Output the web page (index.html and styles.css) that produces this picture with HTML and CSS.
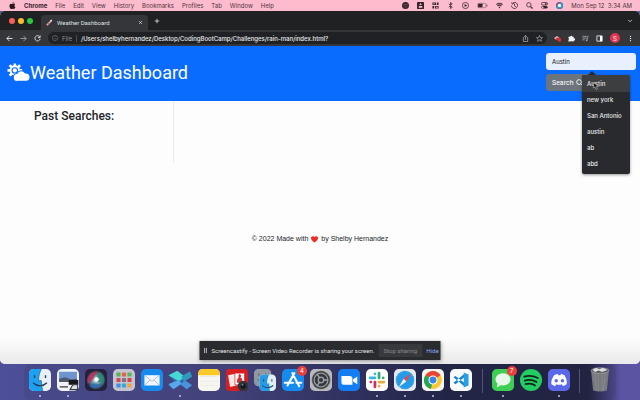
FILE: index.html
```html
<!DOCTYPE html>
<html lang="en">
<head>
<meta charset="utf-8">
<meta name="viewport" content="width=device-width, initial-scale=1">
<title>Weather Dashboard</title>
<link rel="stylesheet" href="styles.css">
</head>
<body>
<div class="desktop">
  <nav class="menubar" aria-label="Menu bar">
    <svg class="apple" viewBox="0 0 16 16"><path d="M11 0c.2 1.600-1.300 3.400-3 3.400C7.800 1.800 9.300.2 11 0zM8 4.600c.8 0 1.700-.9 3.300-.9 1.300.1 2.300.7 2.900 1.600-2.600 1.600-2.200 5.100.5 6.100C14 13.400 12.700 16 11.100 16c-1.200 0-1.600-.7-3-.7s-1.900.7-3 .7C3 16 .8 11.700.9 8.600 1 5.400 3 3.800 4.900 3.800c1.300 0 2.300.8 3.100.8z"/></svg>
    <b>Chrome</b><span>File</span><span>Edit</span><span>View</span><span>History</span><span>Bookmarks</span><span>Profiles</span><span>Tab</span><span>Window</span><span>Help</span>
    <div class="status">
      <svg viewBox="0 0 16 16"><circle cx="8" cy="8" r="8"/><path d="M3 6h10M4 10c2 2 6 2 8 0" stroke="#8a626f" stroke-width="1.500" fill="none"/></svg>
      <svg viewBox="0 0 16 16"><rect width="16" height="16" rx="2"/><path d="M8 2l3 5H5zM4 9h8v4H4z" fill="#fdbccd"/></svg>
      <svg viewBox="0 0 16 16"><path d="M1 1h8v6H1zM11 1h4v6h-4zM1 9h4v6H1zM7 9h8v6H7z"/><path d="M3 3h3v2H3zM9 11h4v2H9z" fill="#fdbccd"/></svg>
      <svg viewBox="0 0 16 16"><path d="M4 4l8 8-4 3V1l4 3-8 8" class="line"/></svg>
      <svg viewBox="0 0 16 16"><circle cx="8" cy="8" r="7" class="line"/><path d="M6 4.500l6 3.500-6 3.500z"/></svg>
      <svg class="battery" viewBox="0 0 24 16"><rect x="1" y="3" width="19" height="10" rx="3" class="line thin"/><rect x="2" y="4" width="10" height="8" rx="1"/><path d="M22 6v4" class="line"/></svg>
      <svg viewBox="0 0 16 16"><path d="M1 6c4-4 10-4 14 0M3.500 9c3-3 6-3 9 0M8 11v3" class="line wide"/></svg>
      <svg viewBox="0 0 16 16"><path d="M3 3a7 7 0 1 1-2 5M1 1l2 4 4-2M8 4v5l3 2" class="line"/></svg>
      <svg viewBox="0 0 16 16"><circle cx="6.500" cy="6.500" r="5" class="line"/><path d="M10 10l5 5" class="line wide"/></svg>
      <svg viewBox="0 0 16 16"><rect x="1" y="1" width="14" height="6" rx="3" class="line"/><rect x="1" y="9" width="14" height="6" rx="3"/><circle cx="11" cy="4" r="2"/><circle cx="4" cy="12" r="2" fill="#fdbccd"/></svg>
      <svg viewBox="0 0 16 16"><circle cx="8" cy="8" r="8" fill="#35476c"/><path d="M2 8a6 6 0 0 1 6-6" stroke="#b8509c" stroke-width="3" fill="none"/><path d="M8 2a6 6 0 1 1-6 6" stroke="#2aa5d8" stroke-width="3" fill="none"/><circle cx="8" cy="8" r="4" fill="#fff"/></svg>
      <time>Mon Sep 12&nbsp; 3:34 AM</time>
    </div>
  </nav>

  <div class="window">
    <div class="tabstrip">
      <i class="light red"></i><i class="light yellow"></i><i class="light green"></i>
      <div class="tab">
        <svg viewBox="0 0 16 16"><path d="M2 14L12 4" stroke="#e7a9b0" stroke-width="4"/><path d="M9 3l5-2-1 5z" fill="#eee"/><path d="M4 9l3 3" stroke="#8f5761" stroke-width="2"/></svg>
        <span>Weather Dashboard</span>
        <button class="plain" aria-label="Close tab"><svg viewBox="0 0 16 16"><path d="M3 3l10 10M13 3L3 13" class="pale"/></svg></button>
      </div>
      <button class="plain newtab" aria-label="New tab"><svg viewBox="0 0 16 16"><path d="M8 2v12M2 8h12" class="pale"/></svg></button>
      <button class="plain last" aria-label="Search tabs"><svg viewBox="0 0 16 16"><path d="M3 5l5 5 5-5" class="pale"/></svg></button>
    </div>
    <div class="toolbar">
      <button class="plain" aria-label="Back"><svg viewBox="0 0 16 16"><path d="M15 8H2M8 2L2 8l6 6" class="pale"/></svg></button>
      <button class="plain dim" aria-label="Forward"><svg viewBox="0 0 16 16"><path d="M1 8h13M8 2l6 6-6 6" class="pale"/></svg></button>
      <button class="plain" aria-label="Reload"><svg viewBox="0 0 16 16"><path d="M13 4a6 6 0 1 0 1 5M14 1v5H9" class="pale"/></svg></button>
      <div class="address">
        <svg class="info" viewBox="0 0 16 16"><circle cx="8" cy="8" r="7" class="pale thin"/><path d="M8 7v5M8 4v1.500" class="pale thin"/></svg>
        <span class="scheme">File</span>
        <span class="url">/Users/shelbyhernandez/Desktop/CodingBootCamp/Challenges/rain-man/index.html?</span>
        <button class="plain dim" aria-label="Share"><svg viewBox="0 0 16 16"><path d="M5 6H3v9h10V6h-2M8 11V1M5 4l3-3 3 3" class="pale"/></svg></button>
        <button class="plain" aria-label="Bookmark"><svg viewBox="0 0 16 16"><path d="M8 1l2 5h5l-4 3.500 1.500 5L8 11.500l-4.500 3 1.500-5L1 6h5z" class="pale thin"/></svg></button>
      </div>
      <div class="extensions">
        <button class="plain" aria-label="Screencastify"><svg viewBox="0 0 16 16"><path d="M0 7l7-5 5 4v5H5z" fill="#f3bac0"/><path d="M5 6h5v5H5z" fill="#b32432"/><circle cx="12" cy="11" r="4.500" fill="#e52828"/></svg></button>
        <button class="plain" aria-label="Extensions"><svg viewBox="0 0 16 16"><path d="M1 4h4a2.500 2.500 0 1 1 5 0h3v4a2.500 2.500 0 1 1 0 4v3H9a2.500 2.500 0 0 0-4 0H1v-4a2.500 2.500 0 0 0 0-4z" fill="#f1f3f4"/></svg></button>
        <button class="plain dim" aria-label="Media"><svg viewBox="0 0 16 16"><path d="M1 3h9M1 7h9M1 11h5M12 12V3h3" class="pale"/><circle cx="10.500" cy="12" r="2" fill="#e8eaed"/></svg></button>
        <button class="plain" aria-label="Side panel"><svg viewBox="0 0 16 16"><path d="M2 2h12v12H2z" class="pale"/><path d="M9 2h5v12H9z" fill="#fff"/></svg></button>
        <button class="avatar" aria-label="Profile">S</button>
        <button class="plain" aria-label="Menu"><svg viewBox="0 0 16 16"><g fill="#e8eaed"><circle cx="8" cy="3" r="1.500"/><circle cx="8" cy="8" r="1.500"/><circle cx="8" cy="13" r="1.500"/></g></svg></button>
      </div>
    </div>

    <div class="page">
      <header class="hero">
        <svg class="cloud" viewBox="0 0 44 36"><g fill="none" stroke="#fff"><circle cx="15" cy="14" r="8" stroke-width="3.500"/><path d="M15 1v5M5 4l4 4M1 14h5M5 24l4-4M25 4l-4 4M24 14h5" stroke-width="5"/></g><circle cx="15" cy="14" r="4" fill="#fff"/><path d="M20 35a7.500 7.500 0 0 1-1-15 9 9 0 0 1 16-1 8 8 0 0 1 2 16z" fill="#fff" stroke="#0a6cff" stroke-width="2"/></svg>
        <h1>Weather Dashboard</h1>
        <form class="search">
          <input type="text" value="Austin" aria-label="City">
          <button type="button">Search <svg viewBox="0 0 16 16"><circle cx="7" cy="7" r="5.500"/><path d="M11 11l4 4"/></svg></button>
          <ul class="suggestions">
            <li class="active">Austin</li><li>new york</li><li>San Antonio</li><li>austin</li><li>ab</li><li>abd</li>
          </ul>
          <svg class="cursor" viewBox="0 0 12 16"><path d="M1 1v11l3-2.500L6 15l2.500-1-2-5H11z" fill="#111" stroke="#ddd"/></svg>
        </form>
      </header>
      <main><aside><h2>Past Searches:</h2></aside></main>
      <footer>© 2022 Made with <svg viewBox="0 0 16 16"><path d="M8 15C3 11 0 8 0 5a4.200 4.200 0 0 1 8-2 4.200 4.200 0 0 1 8 2c0 3-3 6-8 10z" fill="#ef2b24"/></svg> by Shelby Hernandez</footer>
    </div>
  </div>

  <div class="sharing">
    <svg viewBox="0 0 8 16"><path d="M2 2v12M6 2v12" stroke="#c9cacc" stroke-width="2"/></svg>
    <span>Screencastify - Screen Video Recorder is sharing your screen.</span>
    <button class="stop">Stop sharing</button>
    <button class="hide">Hide</button>
  </div>

  <div class="dock">
    <div class="app running"><svg viewBox="0 0 32 32"><rect width="32" height="32" rx="7" fill="#e9eff6"/><path d="M7 0h11c-3 6-4 11-4 17h4c0 6 1 10 2 15H7a7 7 0 0 1-7-7V7a7 7 0 0 1 7-7z" fill="#1ca2f4"/><path d="M8 9v4M24 9v4M6 20c6 6 14 6 20 0" stroke="#223a58" stroke-width="2" fill="none"/><path d="M18 0c-3 6-4 11-4 17h4c0 6 1 10 2 15" stroke="#31597f" fill="none"/></svg></div>
    <div class="app running"><svg viewBox="0 0 32 32"><rect width="32" height="32" rx="7" fill="#f0f2f5"/><path d="M3 4h26v13H3z" fill="#6e94d0"/><path d="M3 14l9-2 8 3 9-1v5H3z" fill="#4e596d"/><path d="M17 16h14v7H17z" fill="#17191d"/><path d="M4 26h12M19 30l4-7h7v7z" stroke="#35393e" stroke-width="1.500" fill="#dce0e2"/></svg></div>
    <div class="app"><svg viewBox="0 0 32 32"><defs><radialGradient id="orb"><stop offset="0" stop-color="#fff"/><stop offset=".35" stop-color="#7ea9b6"/><stop offset="1" stop-color="#292643"/></radialGradient></defs><rect width="32" height="32" rx="7" fill="#252139"/><circle cx="16" cy="16" r="14" fill="url(#orb)"/><path d="M4 21C1 9 12 2 20 4c-8 3-4 11-16 17z" fill="#c02e59" opacity=".8"/><path d="M20 4c9 3 11 14 5 20 0-7-9-4-9-8z" fill="#278879" opacity=".8"/><path d="M7 25c4-7 12-2 18-2-5 6-13 7-18 2z" fill="#2d6faf" opacity=".8"/><circle cx="17" cy="15" r="3" fill="#fff"/></svg></div>
    <div class="app"><svg viewBox="0 0 32 32"><rect width="32" height="32" rx="7" fill="#c3c4d0"/><g><rect x="5" y="5" width="6" height="6" rx="1" fill="#50b653"/><rect x="13" y="5" width="6" height="6" rx="1" fill="#eb6047"/><rect x="21" y="5" width="6" height="6" rx="1" fill="#52b85a"/><rect x="5" y="13" width="6" height="6" rx="1" fill="#dc4256"/><rect x="13" y="13" width="6" height="6" rx="1" fill="#747780"/><rect x="21" y="13" width="6" height="6" rx="1" fill="#e54040"/><rect x="5" y="21" width="6" height="6" rx="1" fill="#438ddd"/><rect x="13" y="21" width="6" height="6" rx="1" fill="#38a9d5"/><rect x="21" y="21" width="6" height="6" rx="1" fill="#efa33a"/></g></svg></div>
    <div class="app"><svg viewBox="0 0 32 32"><rect width="32" height="32" rx="7" fill="#168bed"/><path d="M5 9h22v15H5z" fill="#f2f6fa"/><path d="M5 9l11 9L27 9M5 24l8-8M27 24l-8-8" stroke="#95a9bd" fill="none"/></svg></div>
    <div class="app running"><svg class="wide-icon" viewBox="0 0 36 32"><path d="M0 9l10-5 8 7L29 5l7 4-9 8 9 7-8 6-10-7-10 7-8-6 9-7z" fill="#2c6fae"/><path d="M1 9L14 2l12 10-10 6z" fill="#45dad4"/><path d="M20 11L33 3l3 8-12 7z" fill="#3199bc"/><path d="M1 22l16-6 3 6-12 8z" fill="#5aa7ee"/><path d="M19 22l7-5 10 7-8 6z" fill="#4b93dd"/></svg></div>
    <div class="app"><svg viewBox="0 0 32 32"><rect width="32" height="32" rx="7" fill="#f7f6f1"/><path d="M0 9V7a7 7 0 0 1 7-7h18a7 7 0 0 1 7 7v2z" fill="#ffc928"/><path d="M3 11h26" stroke="#cfcfc9" stroke-dasharray="1 1"/><path d="M3 18h26M3 24h26" stroke="#e8e8e3"/></svg></div>
    <div class="app"><svg viewBox="0 0 32 32"><rect width="32" height="32" rx="5" fill="#d71e23"/><path d="M3 9l14-3 2 17-13 3z" fill="#f5e9e7"/><path d="M13 6h14v17H13z" fill="#fff" stroke="#d71e23"/><path d="M16 20c0-6 1-8 4-8s4 3 4 8zM20 7l2.500 3-2.500 3-2.500-3z" fill="#d33032"/><circle cx="25" cy="25" r="8" fill="#333638"/><circle cx="25" cy="25" r="4" fill="#14171d"/><circle cx="24" cy="23" r="1.500" fill="#748397"/></svg></div>
    <div class="app"><svg viewBox="0 0 32 32"><rect width="25" height="25" rx="6" fill="#9298a2"/><path d="M7 6v4M17 6v3M5 15c4 3 8 3 11 0" stroke="#424b58" fill="none"/><rect x="8" y="8" width="24" height="24" rx="6" fill="#e2edf6"/><path d="M14 8h8c-3 7-3 10-3 13h3l1 11h-9a6 6 0 0 1-6-6V14a6 6 0 0 1 6-6z" fill="#249be8"/><path d="M14 15v3M26 15v3M12 24c4 4 11 4 16 0" stroke="#24496b" stroke-width="1.500" fill="none"/></svg></div>
    <div class="app"><svg viewBox="0 0 32 32"><rect width="32" height="32" rx="7" fill="#168bee"/><path d="M15 6l10 19M18 6L8 24M4 20h12M21 20h7" stroke="#fff" stroke-width="3" stroke-linecap="round"/></svg><span class="badge">4</span></div>
    <div class="app"><svg viewBox="0 0 32 32"><rect width="32" height="32" rx="7" fill="#b8babd"/><circle cx="16" cy="16" r="13" fill="#34383d"/><circle cx="16" cy="16" r="10" fill="none" stroke="#96999d" stroke-width="2"/><circle cx="16" cy="16" r="4" fill="none" stroke="#96999d" stroke-width="2"/><path d="M19 16h7M14 13l-4-6M14 19l-4 6" stroke="#a2a5a8" stroke-width="2"/><circle cx="16" cy="16" r="13" fill="none" stroke="#5d6064" stroke-width="1.500" stroke-dasharray="1 1"/></svg></div>
    <div class="app"><svg viewBox="0 0 32 32"><rect width="32" height="32" rx="7" fill="#147df3"/><path d="M5 10h12a4 4 0 0 1 4 4v9H8a3 3 0 0 1-3-3zM22 15l6-4v11l-6-4z" fill="#fff"/></svg></div>
    <div class="app running"><svg viewBox="0 0 32 32"><rect width="32" height="32" rx="7" fill="#fff"/><g stroke-width="4" stroke-linecap="round"><path d="M13 7v0M6 13h7" stroke="#35b8df"/><path d="M19 6v7M25 13h0" stroke="#32ae76"/><path d="M7 19h0M13 19v7" stroke="#d72b65"/><path d="M19 19h7M19 25v0" stroke="#e5af35"/></g></svg></div>
    <div class="app running"><svg viewBox="0 0 32 32"><rect width="32" height="32" rx="7" fill="#e7e9ec"/><circle cx="16" cy="16" r="13.500" fill="#239be9"/><path d="M25 6L18 18l-4-4z" fill="#ef4646"/><path d="M7 26l7-12 4 4z" fill="#f2f3f5"/><circle cx="16" cy="16" r="12" fill="none" stroke="#9ad0f0" stroke-dasharray="1 3"/></svg></div>
    <div class="app running"><svg viewBox="0 0 32 32"><rect width="32" height="32" rx="7" fill="#f5f5f3"/><circle cx="16" cy="16" r="13" fill="#fbc82f"/><path d="M16 16L5 9a13 13 0 0 1 22 0z" fill="#e84436"/><path d="M16 16l-3 13A13 13 0 0 1 5 9z" fill="#27a455"/><circle cx="16" cy="16" r="6.500" fill="#fff"/><circle cx="16" cy="16" r="5" fill="#3984ed"/></svg></div>
    <div class="app running"><svg viewBox="0 0 32 32"><rect width="32" height="32" rx="7" fill="#f8f9fb"/><path d="M5 12l3-2 14 11v5zM5 20l3 2 14-11V6z" fill="#1685c9"/><path d="M20 5l7 3v16l-7 3z" fill="#299fe3"/></svg></div>
    <i class="divider"></i>
    <div class="app running"><svg viewBox="0 0 32 32"><rect width="32" height="32" rx="7" fill="#3fce54"/><ellipse cx="16" cy="15" rx="11" ry="9" fill="#e8f7e9"/><path d="M8 21l-1 6 7-4z" fill="#e8f7e9"/></svg><span class="badge">7</span></div>
    <div class="app"><svg viewBox="0 0 32 32"><circle cx="16" cy="16" r="16" fill="#22cd61"/><path d="M6 11c7-2 14-1 20 2M7 17c6-2 12-1 17 2M8 22c5-1 10-1 14 2" stroke="#17241d" stroke-width="2.500" stroke-linecap="round" fill="none"/></svg></div>
    <div class="app running"><svg viewBox="0 0 32 32"><rect width="32" height="32" rx="7" fill="#5b68e9"/><path d="M9 9l5-2 1 2h3l1-2 5 2c3 5 4 9 3 13l-5 3-2-3c-3 1-5 1-8 0l-2 3-5-3C4 18 6 13 9 9z" fill="#fff"/><circle cx="12" cy="17" r="2.500" fill="#5b68e9"/><circle cx="21" cy="17" r="2.500" fill="#5b68e9"/></svg></div>
    <i class="divider"></i>
    <div class="app"><svg class="trash" viewBox="0 0 32 36"><path d="M3 5h26l-3 29q-10 3-20 0z" fill="#77797d"/><path d="M8 7l3 27M13 7l1 28M19 7v28M24 7l-3 27" stroke="#8e9094"/><ellipse cx="16" cy="5" rx="13" ry="4" fill="#55585c" stroke="#a5a7aa"/><path d="M5 4l5-3 5 2 5-2 7 3-8 3-5-2-5 2z" fill="#d9dbdd"/></svg></div>
  </div>
</div>
</body>
</html>
```
FILE: styles.css
```css
* { box-sizing: border-box; }

body {
  margin: 0;
  font-family: Inter, "Liberation Sans", sans-serif;
  font-size: 6px;
  color: #212529;
}

button { font: inherit; color: inherit; border: 0; padding: 0; }
svg { display: block; flex: none; }
h1, h2, ul { margin: 0; padding: 0; font-weight: 500; }
h1, h2, .tab, .search button, .sharing { font-family: Roboto, "Liberation Sans", sans-serif; }

.desktop {
  display: flex;
  flex-direction: column;
  position: relative;
  min-height: 100vh;
  background: linear-gradient(90deg, #4d5099 0%, #45437f 35%, #171a36 70%, #15182c 92%, #5a54a3 97%);
}

/* Menu bar */
.menubar {
  display: flex;
  align-items: center;
  gap: 8px;
  height: 11px;
  padding: 0 8px 0 9px;
  background: #fdbccd;
  color: #50333c;
  white-space: nowrap;
}
.menubar .apple { width: 7px; height: 7px; fill: #2a1a20; }
.menubar b { color: #35202a; }
.status { display: flex; align-items: center; gap: 8px; margin-left: auto; }
.status svg { width: 7px; height: 7px; fill: #35242c; }
.status .battery { width: 11px; }
.status .line { fill: none; stroke: #4d3540; stroke-width: 2; }
.status .wide { stroke-width: 3; }
.status .thin { stroke-width: 1; }

/* Browser window */
.window {
  display: flex;
  flex: 1;
  flex-direction: column;
  overflow: hidden;
  border-radius: 5px;
  background: #fdfdfd;
}
.tabstrip {
  display: flex;
  align-items: center;
  height: 19px;
  padding: 0 7px 0 9px;
  background: #1f2123;
  color: #dfe1e4;
}
.light { width: 6px; height: 6px; margin-right: 3px; border-radius: 50%; }
.red { background: #fb5f57; }
.yellow { background: #fbbd2e; }
.green { background: #28c840; }
.tab {
  display: flex;
  align-items: center;
  align-self: flex-end;
  gap: 4px;
  width: 107px;
  height: 15px;
  margin-left: 5px;
  padding: 0 5px;
  border-radius: 4px 4px 0 0;
  background: #35363a;
}
.tab > svg { width: 7px; height: 7px; }
.tab .plain { margin-left: auto; }
.tab .plain svg { width: 5px; height: 5px; }
.plain { background: none; }
.plain svg { width: 7px; height: 7px; }
.pale { fill: none; stroke: #e8eaed; stroke-width: 2; }
.pale.thin { stroke-width: 1; }
.dim { opacity: 0.6; }
.newtab { margin-left: 6px; }
.newtab svg { width: 6px; height: 6px; }
.last { margin-left: auto; }
.last svg { width: 6px; height: 6px; }

.toolbar {
  display: flex;
  align-items: center;
  gap: 7px;
  height: 16px;
  padding: 0 6px;
  background: #35363a;
}
.address {
  display: flex;
  flex: 1;
  align-items: center;
  gap: 4px;
  height: 12px;
  padding: 0 4px;
  border-radius: 6px;
  background: #202124;
  color: #e8eaed;
}
.info { width: 6px; height: 6px; opacity: 0.7; }
.scheme { padding-right: 4px; border-right: 1px solid #4b4d51; color: #8e9195; }
.url { flex: 1; font-weight: 500; }
.address .plain + .plain { margin-left: 3px; }
.extensions { display: flex; align-items: center; gap: 7px; }
.avatar {
  width: 10px;
  height: 10px;
  border-radius: 50%;
  background: #e4334f;
  color: #fff;
  text-align: center;
}

/* Weather page */
.page { flex: 1; background: linear-gradient(#fdfdfd 92%, #e9e9eb); }
.hero {
  display: flex;
  align-items: flex-start;
  height: 55px;
  padding: 7px 4px 0 7px;
  background: #0a6cff;
  color: #fff;
}
.cloud { width: 23px; height: 19px; margin-top: 10px; }
.hero h1 { margin-top: 9px; font-size: 18px; font-weight: 400; line-height: 22px; }
.search {
  display: flex;
  flex-direction: column;
  align-items: flex-start;
  gap: 4px;
  position: relative;
  width: 90px;
  margin-left: auto;
}
.search input {
  width: 100%;
  height: 17px;
  padding: 0 6px;
  border: 0;
  border-radius: 3px;
  background: #e8f0fe;
  color: #111;
  font: inherit;
}
.search button {
  display: flex;
  align-items: center;
  gap: 2px;
  height: 17px;
  padding: 0 6px;
  border-radius: 3px;
  background: #6c757d;
  font-size: 7px;
}
.search button svg { width: 7px; height: 7px; fill: none; stroke: #fff; stroke-width: 2; }
.suggestions {
  position: absolute;
  top: 22px;
  left: 36px;
  z-index: 1;
  width: 48px;
  border-radius: 2px;
  background: #292a2d;
  box-shadow: 0 1px 3px #0006;
  color: #e8eaed;
  line-height: 16px;
  list-style: none;
}
.suggestions::before {
  content: "";
  position: absolute;
  top: -4px;
  left: 6px;
  border: 4px solid transparent;
  border-top: 0;
  border-bottom-color: #292a2d;
}
.suggestions li { padding: 0 5px; white-space: nowrap; }
.suggestions .active { padding-top: 1px; background: #3d3e40; }
.suggestions li:last-child { padding-bottom: 2px; }
.cursor { position: absolute; top: 29px; left: 47px; z-index: 2; width: 6px; height: 8px; }

main { display: flex; }
aside {
  width: 174px;
  height: 62px;
  padding: 7px 0 0 34px;
  border-right: 1px solid #e8e9ea;
}
aside h2 { font-size: 12px; line-height: 16px; }
footer {
  display: flex;
  align-items: center;
  justify-content: center;
  gap: 3px;
  margin-top: 71px;
  font-family: "Liberation Sans", sans-serif;
  font-size: 7px;
  line-height: 10px;
}
footer svg { width: 7px; height: 7px; }

/* Screen sharing notice */
.sharing {
  display: flex;
  align-items: center;
  gap: 4px;
  position: absolute;
  bottom: 40px;
  left: 50%;
  width: 241px;
  height: 19px;
  padding: 0 5px 0 4px;
  transform: translateX(-50%);
  background: #292b2f;
  box-shadow: 0 1px 4px #0006;
  color: #e0e1e3;
  font-size: 6px;
  white-space: nowrap;
}
.sharing svg { width: 4px; height: 7px; }
.stop { flex: none; width: 44px; height: 13px; margin-left: auto; background: #37393d; color: #898b8f; }
.hide { background: none; color: #8ea9f5; }

/* Dock */
.dock {
  display: flex;
  align-items: flex-start;
  justify-content: space-between;
  height: 36px;
  margin: 0 24px;
  padding: 5px 5px 0;
  border-radius: 7px;
  background: #3e3f724d;
}
.app { position: relative; width: 22px; height: 30px; }
.app svg { width: 22px; height: 22px; }
.app .wide-icon { width: 24px; margin-left: -1px; }
.app .trash { height: 25px; margin-top: -2px; }
.running::after {
  content: "";
  position: absolute;
  bottom: 2px;
  left: 10px;
  width: 2px;
  height: 2px;
  border-radius: 50%;
  background: #c4c5de;
}
.badge {
  position: absolute;
  top: -3px;
  right: -3px;
  width: 10px;
  height: 10px;
  border-radius: 50%;
  background: #ee3e3b;
  color: #fff;
  line-height: 10px;
  text-align: center;
}
.divider { width: 7px; height: 24px; background: linear-gradient(90deg, #0000 3px, #53547a 3px, #53547a 4px, #0000 4px); }
```
